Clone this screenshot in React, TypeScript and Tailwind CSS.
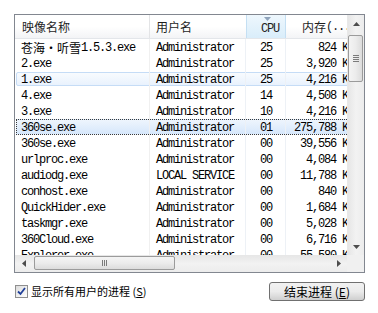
import React from 'react';

type Row = { name: React.ReactNode; user: string; cpu: string; mem: string; state?: 'hover' | 'selected' };

const CJK = "font-['Noto_Sans_CJK_SC','Microsoft_YaHei',sans-serif] tracking-normal";

const ROWS: Row[] = [
  { name: <><span className={`${CJK} text-[12px]`}>苍海・听雪</span>1.5.3.exe</>, user: 'Administrator', cpu: '25', mem: '824 K' },
  { name: '2.exe', user: 'Administrator', cpu: '25', mem: '3,920 K' },
  { name: '1.exe', user: 'Administrator', cpu: '25', mem: '4,216 K', state: 'hover' },
  { name: '4.exe', user: 'Administrator', cpu: '14', mem: '4,508 K' },
  { name: '3.exe', user: 'Administrator', cpu: '10', mem: '4,216 K' },
  { name: '360se.exe', user: 'Administrator', cpu: '01', mem: '275,788 K', state: 'selected' },
  { name: '360se.exe', user: 'Administrator', cpu: '00', mem: '39,556 K' },
  { name: 'urlproc.exe', user: 'Administrator', cpu: '00', mem: '4,084 K' },
  { name: 'audiodg.exe', user: 'LOCAL SERVICE', cpu: '00', mem: '11,788 K' },
  { name: 'conhost.exe', user: 'Administrator', cpu: '00', mem: '840 K' },
  { name: 'QuickHider.exe', user: 'Administrator', cpu: '00', mem: '1,684 K' },
  { name: 'taskmgr.exe', user: 'Administrator', cpu: '00', mem: '5,028 K' },
  { name: '360Cloud.exe', user: 'Administrator', cpu: '00', mem: '6,716 K' },
  { name: 'Explorer.exe', user: 'Administrator', cpu: '00', mem: '55,580 K' },
];

const Arrow = ({ dir }: { dir: 'up' | 'down' | 'left' | 'right' }) => {
  const pts = {
    up: '0,4 3.5,0 7,4',
    down: '0,0 7,0 3.5,4',
    left: '4,0 4,7 0,3.5',
    right: '0,0 0,7 4,3.5',
  }[dir];
  const vert = dir === 'up' || dir === 'down';
  return (
    <svg width={vert ? 7 : 4} height={vert ? 4 : 7} viewBox={vert ? '0 0 7 4' : '0 0 4 7'}>
      <polygon points={pts} fill="#4d4d4d" />
    </svg>
  );
};

const ProcRow = ({ row }: { row: Row }) => (
  <div className="relative flex h-[16px] w-[337px] shrink-0">
    {row.state === 'hover' && (
      <div className="absolute inset-x-[1px] inset-y-[1px] rounded-[2px] border border-[#c5dcf6] bg-gradient-to-b from-[#f8fbfe] to-[#e9f2fd]" />
    )}
    {row.state === 'selected' && (
      <div className="absolute inset-x-[1px] inset-y-[0px] border border-dotted border-[#3a3a3a] bg-gradient-to-b from-[#eef5fd] to-[#d6e7fb]" />
    )}
    <div className="relative w-[135px] border-r border-[#f0f0f0] pl-[6px] pt-[2px] flex items-center whitespace-nowrap overflow-hidden">{row.name}</div>
    <div className="relative w-[96px] border-r border-[#edf1f6] pl-[6px] pt-[2px] flex items-center whitespace-nowrap">{row.user}</div>
    <div className="relative w-[40px] border-r border-[#edf1f6] pl-[14px] pt-[2px] flex items-center">{row.cpu}</div>
    <div className="relative w-[66px] pr-[4px] pt-[2px] flex items-center justify-end whitespace-nowrap">{row.mem}</div>
  </div>
);

export default function App() {
  return (
    <div className="w-[378px] h-[313px] bg-white overflow-hidden pt-[14px] pl-[14px] text-black">
      <div className="w-[351px] h-[259px] border border-[#828790] grid grid-cols-[332px_17px] grid-rows-[240px_17px]">
        {/* list content */}
        <div className="overflow-hidden flex flex-col font-['Liberation_Mono',monospace] text-[12px] tracking-[-1.2px] leading-none">
          <div className="flex h-[24px] w-[337px] shrink-0 border-b border-[#e3e6ea] bg-gradient-to-b from-white via-white to-[#f3f4f6] text-[#1e1e1e]">
            <div className={`w-[135px] border-r border-[#e3e4e6] pl-[7px] flex items-center text-[12px] ${CJK}`}>映像名称</div>
            <div className={`w-[96px] pl-[6px] flex items-center text-[12px] ${CJK}`}>用户名</div>
            <div className="relative w-[40px] border-x border-[#c4dff3] bg-gradient-to-b from-[#eef7fd] to-[#d9edfa] pl-[14px] pt-[4px] flex items-center">
              <div className="absolute top-[2px] left-[17px]">
                <svg width="7" height="4" viewBox="0 0 7 4"><polygon points="0,0 7,0 3.5,4" fill="#8ea3bb" /></svg>
              </div>
              CPU
            </div>
            <div className="w-[66px] pl-[16px] flex items-center whitespace-nowrap">
              <span className={`${CJK} text-[12px]`}>内存</span>(...
            </div>
          </div>
          {ROWS.map((r, i) => (
            <ProcRow key={i} row={r} />
          ))}
        </div>

        {/* vertical scrollbar */}
        <div className="flex flex-col bg-gradient-to-r from-[#e6e6e6] via-[#f2f2f2] to-[#ececec] border-l border-[#e8e8e8]">
          <div className="h-[17px] flex items-center justify-center shrink-0"><Arrow dir="up" /></div>
          <div className="flex-1 relative">
            <div className="absolute top-[3px] left-0 w-[15px] h-[47px] rounded-[2px] border border-[#9b9b9b] bg-gradient-to-r from-[#f4f4f4] via-[#ececec] to-[#dcdcdc] flex flex-col items-center justify-center gap-[1px]">
              <div className="w-[6px] h-[1px] bg-[#7b7b7b]" />
              <div className="w-[6px] h-[1px] bg-[#7b7b7b]" />
              <div className="w-[6px] h-[1px] bg-[#7b7b7b]" />
              <div className="w-[6px] h-[1px] bg-[#7b7b7b]" />
            </div>
          </div>
          <div className="h-[17px] flex items-center justify-center shrink-0"><Arrow dir="down" /></div>
        </div>

        {/* horizontal scrollbar */}
        <div className="flex bg-gradient-to-b from-[#e6e6e6] via-[#f2f2f2] to-[#ececec]">
          <div className="w-[17px] flex items-center justify-center shrink-0"><Arrow dir="left" /></div>
          <div className="flex-1 relative">
            <div className="absolute left-[2px] top-[1px] w-[141px] h-[14px] rounded-[2px] border border-[#9b9b9b] bg-gradient-to-b from-[#f4f4f4] via-[#ececec] to-[#dcdcdc] flex items-center justify-center gap-[1px]">
              <div className="w-[1px] h-[6px] bg-[#7b7b7b]" />
              <div className="w-[1px] h-[6px] bg-[#7b7b7b]" />
              <div className="w-[1px] h-[6px] bg-[#7b7b7b]" />
            </div>
          </div>
          <div className="w-[17px] flex items-center justify-center shrink-0"><Arrow dir="right" /></div>
        </div>
        <div className="bg-[#f0f0f0]" />
      </div>

      {/* bottom bar */}
      <div className="mt-[9px] w-[351px] flex items-center justify-between">
        <label className="flex items-center gap-[3px] pl-[1px]">
          <span className="w-[13px] h-[13px] border border-[#8f8f8f] bg-gradient-to-br from-[#dcdcdc] to-white p-[1px] flex items-center justify-center">
            <svg width="9" height="9" viewBox="0 0 9 9">
              <path d="M1 4.5 L3.5 7 L8 1" fill="none" stroke="#21409a" strokeWidth="1.8" />
            </svg>
          </span>
          <span className={`text-[11px] ${CJK}`}>显示所有用户的进程 (<span className="underline">S</span>)</span>
        </label>
        <button className="w-[96px] h-[19px] rounded-[3px] border border-[#707070] bg-gradient-to-b from-[#f2f2f2] via-[#ebebeb] to-[#cfcfcf] flex items-center justify-center">
          <span className={`text-[12px] ${CJK}`}>结束进程 (<span className="underline">E</span>)</span>
        </button>
      </div>
    </div>
  );
}
